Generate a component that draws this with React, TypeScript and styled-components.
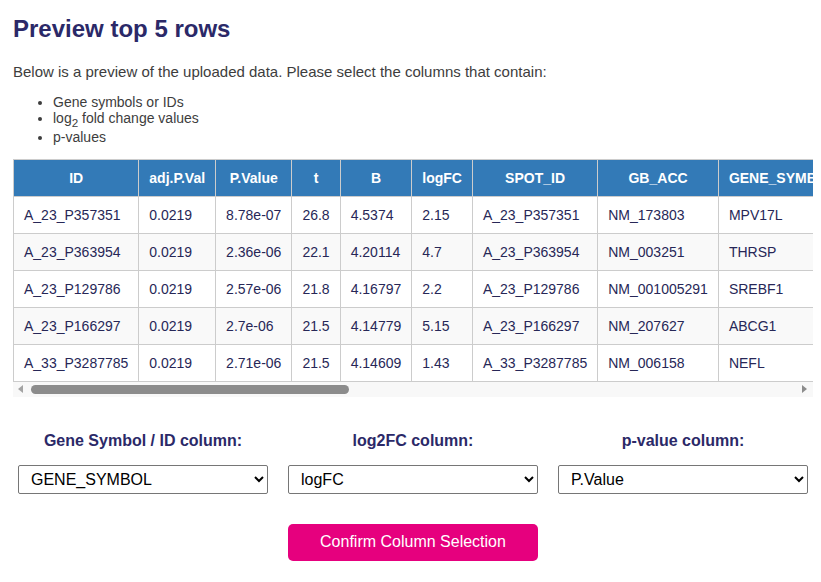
import React from "react";
import styled, { createGlobalStyle } from "styled-components";

const GlobalStyle = createGlobalStyle`
  body {
    margin: 0;
    background: #ffffff;
    font-family: "Liberation Sans", Arial, sans-serif;
  }
`;

const Page = styled.div`
  padding: 15px 8px 20px 13px;
  width: 800px;
`;

const Title = styled.h2`
  margin: 0 0 20px;
  font-size: 24px;
  font-weight: bold;
  color: #2b2968;
`;

const Intro = styled.p`
  margin: 0 0 14px;
  font-size: 15px;
  color: #3d3d3d;
`;

const List = styled.ul`
  margin: 0 0 14px;
  padding-left: 40px;
  font-size: 14px;
  color: #3d3d3d;
`;

const Scroller = styled.div`
  width: 800px;
  overflow: hidden;
`;

const Table = styled.table`
  border-collapse: collapse;
  font-size: 14px;
  white-space: nowrap;
`;

const HeadCell = styled.th`
  background: #337ab7;
  color: #ffffff;
  font-weight: bold;
  text-align: center;
  padding: 10px;
  border: 1px solid #cccccc;
`;

const Row = styled.tr<{ $striped: boolean }>`
  background: ${({ $striped }) => ($striped ? "#f9f9f9" : "#ffffff")};
`;

const Cell = styled.td`
  padding: 10px;
  border: 1px solid #cccccc;
  color: #272757;
  text-align: left;
`;

/* drawn horizontal scrollbar under the table */
const ScrollTrack = styled.div`
  display: flex;
  align-items: center;
  height: 15px;
  background: #f8f8f8;
`;

const Arrow = styled.span<{ $dir: "left" | "right" }>`
  width: 0;
  height: 0;
  border-top: 4px solid transparent;
  border-bottom: 4px solid transparent;
  ${({ $dir }) =>
    $dir === "left"
      ? "border-right: 5px solid #a3a3a3; margin-left: 5px;"
      : "border-left: 5px solid #8c8c8c; margin-left: auto; margin-right: 6px;"}
`;

const Thumb = styled.div`
  width: 318px;
  height: 9px;
  margin-left: 8px;
  border-radius: 5px;
  background: #8c8c8c;
`;

const Selectors = styled.div`
  display: grid;
  grid-template-columns: repeat(3, minmax(0, 1fr));
  gap: 10px;
  margin-top: 35px;
`;

const Field = styled.div`
  display: flex;
  flex-direction: column;
  align-items: stretch;
  padding: 0 5px;
  min-width: 0;
`;

const Label = styled.label`
  text-align: center;
  font-size: 16px;
  font-weight: bold;
  color: #2b2968;
  margin-bottom: 15px;
`;

const Select = styled.select`
  width: 100%;
  height: 29px;
  padding: 0 8px;
  font-family: "Liberation Sans", Arial, sans-serif;
  font-size: 16px;
  color: #000000;
  background: #ffffff;
  border: 1px solid #767676;
  border-radius: 2px;
`;

const Actions = styled.div`
  display: flex;
  justify-content: center;
  margin-top: 30px;
`;

const ConfirmButton = styled.button`
  width: 250px;
  height: 37px;
  background: #e6007e;
  color: #ffffff;
  border: none;
  border-radius: 5px;
  font-family: "Liberation Sans", Arial, sans-serif;
  font-size: 16px;
  cursor: pointer;
`;

const columns = [
  "ID",
  "adj.P.Val",
  "P.Value",
  "t",
  "B",
  "logFC",
  "SPOT_ID",
  "GB_ACC",
  "GENE_SYMBOL",
  "GENE_NAME",
  "UNIGENE_ID",
  "ENSEMBL_ID",
  "CHROMOSOMAL_LOCATION",
  "CYTOBAND",
];

const rows: string[][] = [
  ["A_23_P357351", "0.0219", "8.78e-07", "26.8", "4.5374", "2.15", "A_23_P357351", "NM_173803", "MPV17L", "MPV17 mitochondrial inner membrane protein like", "Hs.406919", "ENST00000300005", "chr16:15489611-15489670", "hs|16p13.11"],
  ["A_23_P363954", "0.0219", "2.36e-06", "22.1", "4.20114", "4.7", "A_23_P363954", "NM_003251", "THRSP", "thyroid hormone responsive", "Hs.479438", "ENST00000281419", "chr11:77774897-77774956", "hs|11q14.1"],
  ["A_23_P129786", "0.0219", "2.57e-06", "21.8", "4.16797", "2.2", "A_23_P129786", "NM_001005291", "SREBF1", "sterol regulatory element binding transcription factor 1", "Hs.592123", "ENST00000355815", "chr17:17715105-17715164", "hs|17p11.2"],
  ["A_23_P166297", "0.0219", "2.7e-06", "21.5", "4.14779", "5.15", "A_23_P166297", "NM_207627", "ABCG1", "ATP binding cassette subfamily G member 1", "Hs.124649", "ENST00000361802", "chr21:43707518-43707577", "hs|21q22.3"],
  ["A_33_P3287785", "0.0219", "2.71e-06", "21.5", "4.14609", "1.43", "A_33_P3287785", "NM_006158", "NEFL", "neurofilament light", "Hs.521461", "ENST00000221169", "chr8:24808468-24808527", "hs|8p21.2"],
];

const App: React.FC = () => {
  return (
    <>
      <GlobalStyle />
      <Page>
        <Title>Preview top 5 rows</Title>
        <Intro>
          Below is a preview of the uploaded data. Please select the columns
          that contain:
        </Intro>
        <List>
          <li>Gene symbols or IDs</li>
          <li>
            log<sub>2</sub> fold change values
          </li>
          <li>p-values</li>
        </List>

        <Scroller>
          <Table>
            <thead>
              <tr>
                {columns.map((c) => (
                  <HeadCell key={c}>{c}</HeadCell>
                ))}
              </tr>
            </thead>
            <tbody>
              {rows.map((r, i) => (
                <Row key={r[0]} $striped={i % 2 === 1}>
                  {r.map((v, j) => (
                    <Cell key={j}>{v}</Cell>
                  ))}
                </Row>
              ))}
            </tbody>
          </Table>
        </Scroller>
        <ScrollTrack>
          <Arrow $dir="left" />
          <Thumb />
          <Arrow $dir="right" />
        </ScrollTrack>

        <Selectors>
          <Field>
            <Label>Gene Symbol / ID column:</Label>
            <Select defaultValue="GENE_SYMBOL">
              {columns.map((c) => (
                <option key={c}>{c}</option>
              ))}
            </Select>
          </Field>
          <Field>
            <Label>log2FC column:</Label>
            <Select defaultValue="logFC">
              {columns.map((c) => (
                <option key={c}>{c}</option>
              ))}
            </Select>
          </Field>
          <Field>
            <Label>p-value column:</Label>
            <Select defaultValue="P.Value">
              {columns.map((c) => (
                <option key={c}>{c}</option>
              ))}
            </Select>
          </Field>
        </Selectors>

        <Actions>
          <ConfirmButton>Confirm Column Selection</ConfirmButton>
        </Actions>
      </Page>
    </>
  );
};

export default App;
